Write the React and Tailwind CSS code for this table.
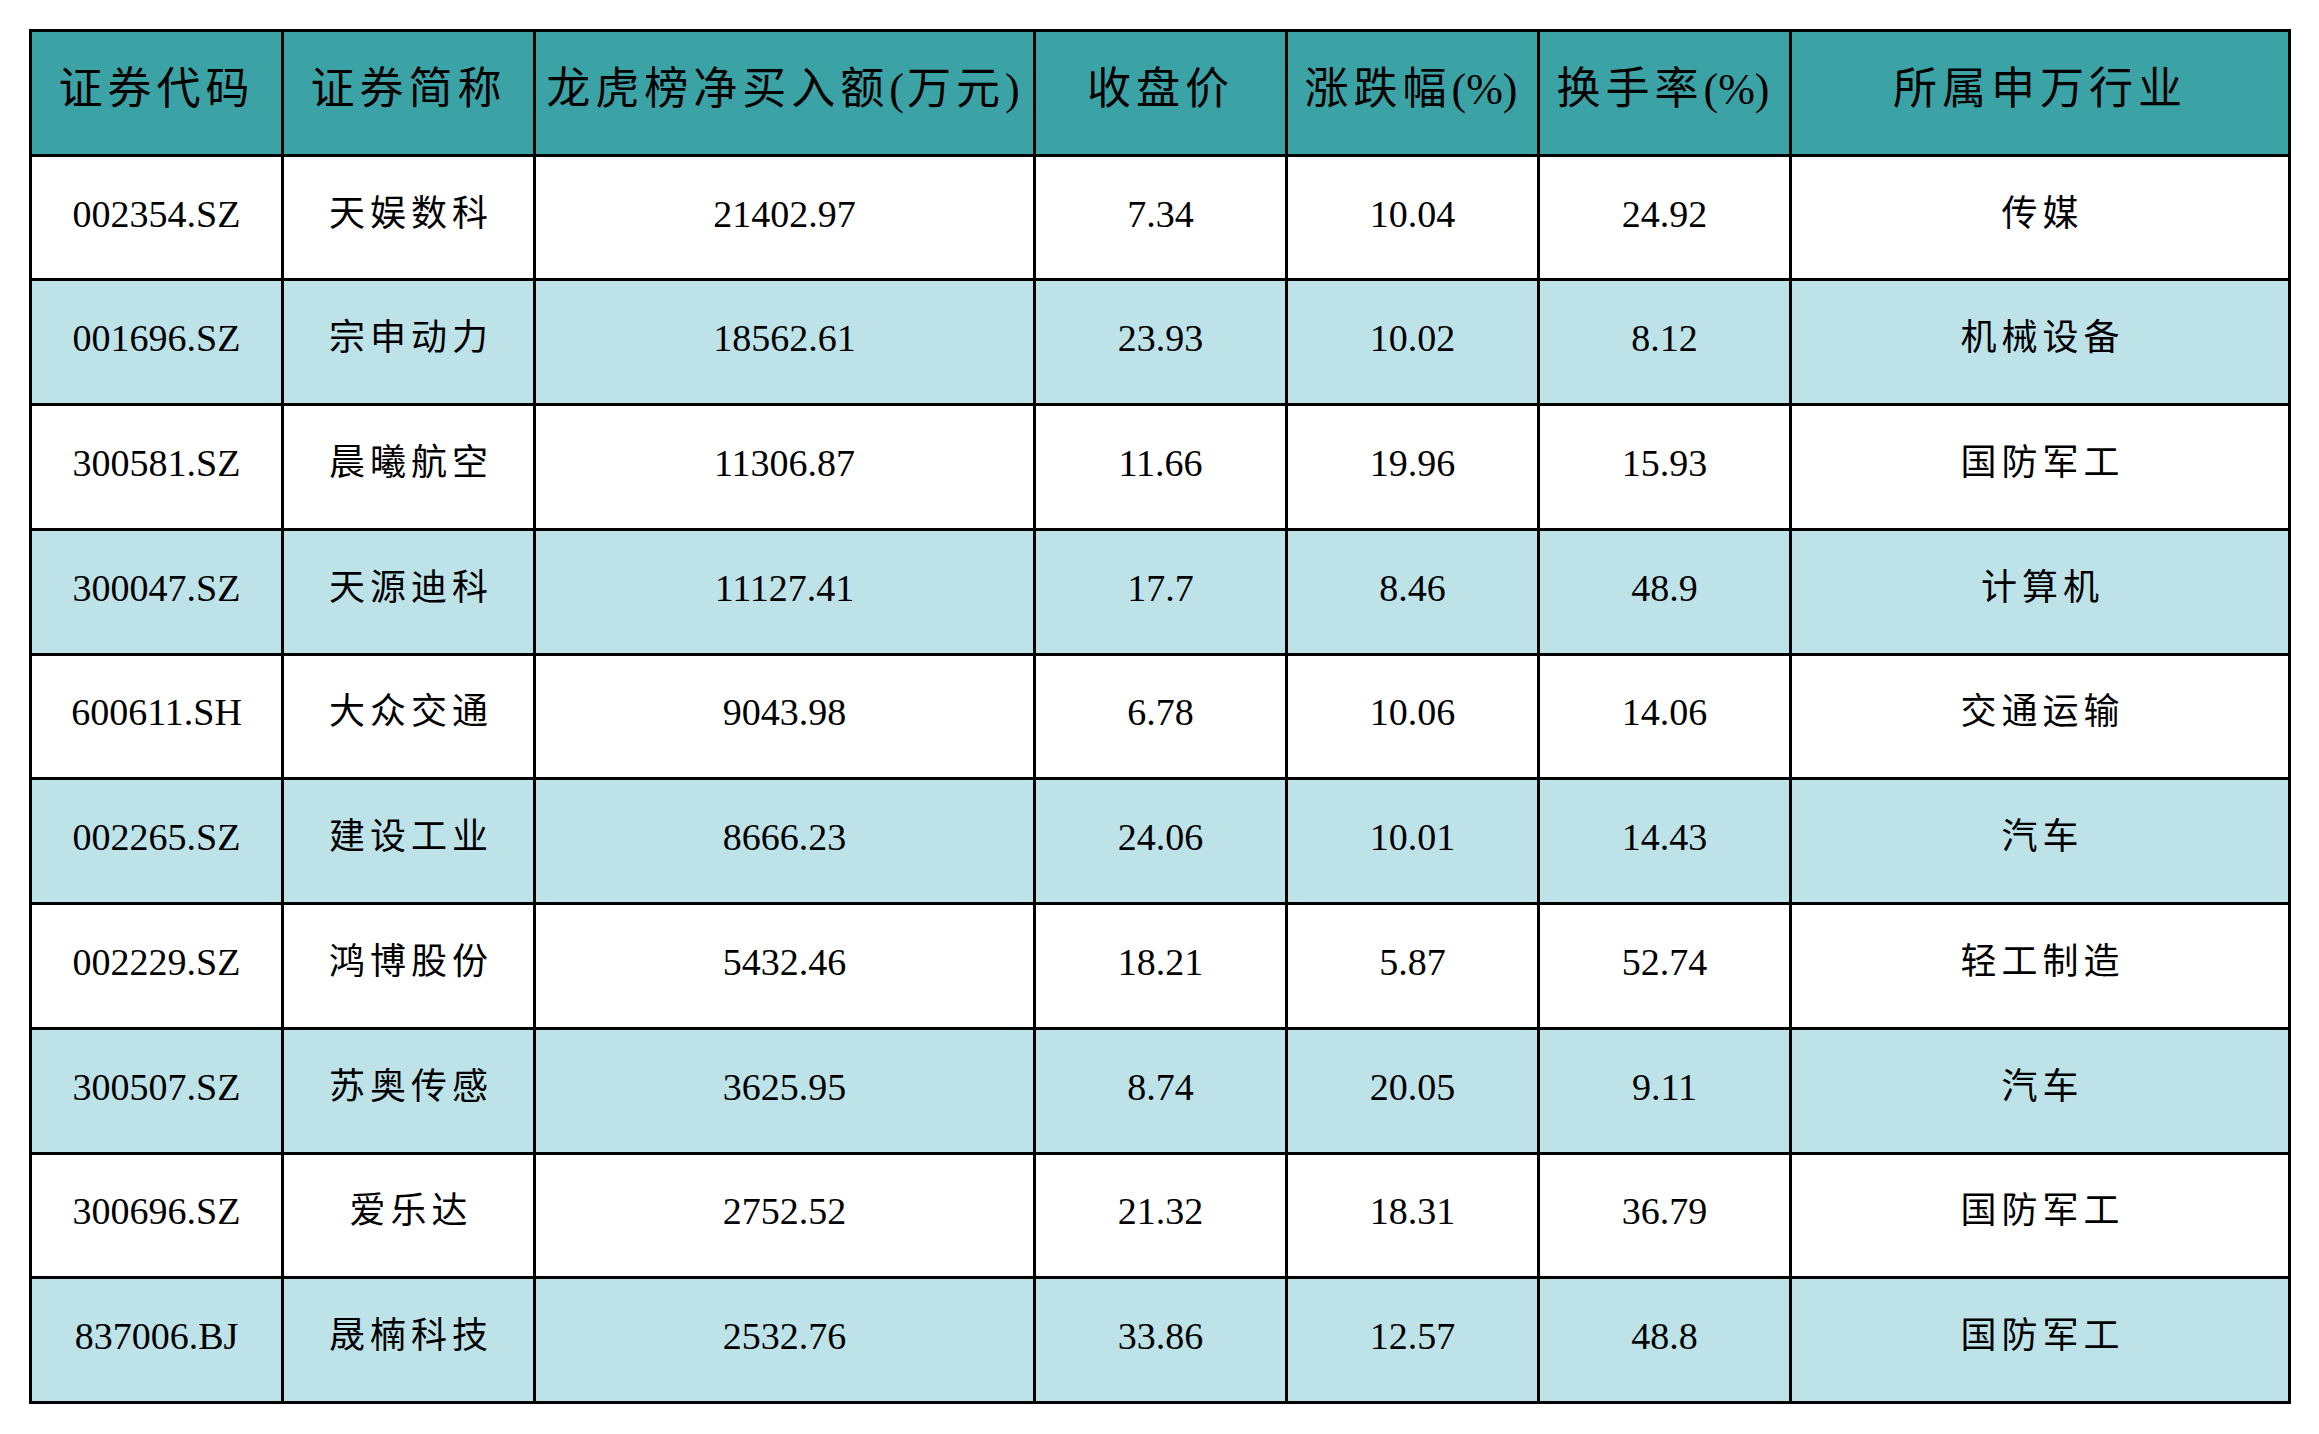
import React from "react";

const headers = [
  [["证券代码", true]],
  [["证券简称", true]],
  [["龙虎榜净买入额", true], ["(", false], ["万元", true], [")", false]],
  [["收盘价", true]],
  [["涨跌幅", true], ["(%)", false]],
  [["换手率", true], ["(%)", false]],
  [["所属申万行业", true]],
];

const rows = [
  ["002354.SZ", "天娱数科", "21402.97", "7.34", "10.04", "24.92", "传媒"],
  ["001696.SZ", "宗申动力", "18562.61", "23.93", "10.02", "8.12", "机械设备"],
  ["300581.SZ", "晨曦航空", "11306.87", "11.66", "19.96", "15.93", "国防军工"],
  ["300047.SZ", "天源迪科", "11127.41", "17.7", "8.46", "48.9", "计算机"],
  ["600611.SH", "大众交通", "9043.98", "6.78", "10.06", "14.06", "交通运输"],
  ["002265.SZ", "建设工业", "8666.23", "24.06", "10.01", "14.43", "汽车"],
  ["002229.SZ", "鸿博股份", "5432.46", "18.21", "5.87", "52.74", "轻工制造"],
  ["300507.SZ", "苏奥传感", "3625.95", "8.74", "20.05", "9.11", "汽车"],
  ["300696.SZ", "爱乐达", "2752.52", "21.32", "18.31", "36.79", "国防军工"],
  ["837006.BJ", "晟楠科技", "2532.76", "33.86", "12.57", "48.8", "国防军工"],
];

const font = { fontFamily: '"Liberation Serif", "Noto Sans CJK SC", serif' };

export default function App() {
  return (
    <div className="w-[2319px] h-[1434px] bg-white pt-[29px] pl-[29px]" style={font}>
      <div className="w-[2262px] h-[1375px] bg-black p-[3px] grid grid-cols-[249px_249px_497px_249px_249px_249px_496px] grid-rows-11 gap-[3px]">
        {headers.map((h, i) => (
          <div
            key={"h" + i}
            className="bg-[#3ba3a6] flex items-center justify-center text-black text-[44px] pb-[6px] whitespace-nowrap leading-none"
          >
            {h.map(([t, cjk], j) => (
              <span
                key={j}
                className={cjk ? "tracking-[5px]" : "tracking-normal mr-[3px]"}
              >
                {t}
              </span>
            ))}
          </div>
        ))}
        {rows.map((r, ri) =>
          r.map((c, ci) => {
            const cjk = ci === 1 || ci === 6;
            return (
              <div
                key={ri + "-" + ci}
                className={
                  (ri % 2 === 1 ? "bg-[#bde3e9] " : "bg-white ") +
                  "flex items-center justify-center text-black leading-none whitespace-nowrap pb-[8px] " +
                  (cjk ? "text-[36px] tracking-[5px] pl-[5px]" : "text-[38px]")
                }
              >
                {c}
              </div>
            );
          })
        )}
      </div>
    </div>
  );
}
